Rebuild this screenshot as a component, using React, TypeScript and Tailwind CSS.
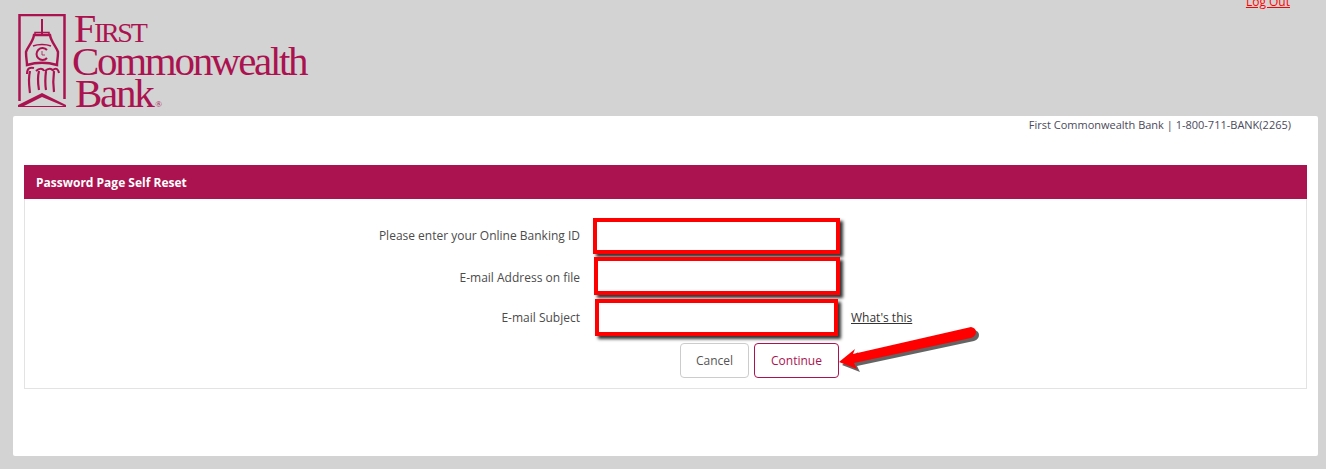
const Logo = () => {
  return (
    <div className="flex items-start pl-[18px] pt-[14px] text-[#ab1350]">
      <svg width="48" height="94" viewBox="0 0 48 94" fill="none" stroke="#ab1350" className="shrink-0">
        <path d="M46.500 85V1H1.500v86" strokeWidth="2.500" />
        <path d="M24 5v15" strokeWidth="2" />
        <path d="M17 21v-2.500h14V21" strokeWidth="1.500" />
        <path d="M16 21h16c1 7 6 11 8 17 0 6-1 9-1 13-10-3-20-3-30 0 0-4-1-7-1-13 2-6 7-10 8-17z" strokeWidth="2.400" />
        <path d="M15 32c5-2 13-2 18 0" strokeWidth="1.500" />
        <path d="M29 36a6 6 0 1 0 0 8" strokeWidth="2" />
        <path d="M24 37v4h3" strokeWidth="0.800" />
        <path d="M9 60c0-6 3-7 7-6M18 57c3-3 7-3 8 0M27 57c3-3 7-3 8 0M35 56c2-2 5-2 6 3" strokeWidth="2" />
        <path d="M12 57c-2 8-1 14 0 22M21 57c-2 8-1 13 0 19M28 57c-1 8-1 13 0 19M36 57c-1 8-1 14 0 21" strokeWidth="2.200" />
        <path fill="#ab1350" stroke="none" d="M0 93V91L24 79 48 91V93L24 83 6 92H48V93Z" />
      </svg>
      <div className="ml-[6px] flex flex-col font-['Liberation_Serif',serif] tracking-[-2.3px]">
        <div className="ml-[2px] h-[32px] text-[40px] leading-[30px]">
          F<span className="text-[28px]">IRST</span>
        </div>
        <div className="h-[32px] text-[41px] leading-[30px]">Commonwealth</div>
        <div className="ml-[3px] flex h-[29px] items-baseline text-[41px] leading-[30px]">
          Bank
          <span className="ml-[3px] text-[9px] tracking-normal">®</span>
        </div>
      </div>
    </div>
  );
};

type RowProps = {
  label: string;
  boxClass: string;
  rowClass: string;
  labelClass?: string;
  link?: string;
};

const FormRow = ({ label, boxClass, rowClass, labelClass, link }: RowProps) => {
  return (
    <div className={`flex items-center ${rowClass}`}>
      <label className={`w-[555px] shrink-0 text-right text-[12px] text-[#4b4b4b] ${labelClass ?? ""}`}>{label}</label>
      <input
        type="text"
        aria-label={label}
        className={`block border-[4px] border-[#ff0000] bg-white shadow-[3px_3px_3px_rgba(0,0,0,0.8)] ${boxClass}`}
      />
      {link && (
        <a href="#" className="ml-[13px] text-[12px] text-[#333333] underline">
          {link}
        </a>
      )}
    </div>
  );
};

export default function App() {
  return (
    <div className="h-[469px] w-[1326px] overflow-hidden bg-[#d3d3d3] font-['Open_Sans',sans-serif]">
      <header className="relative h-[116px]">
        <Logo />
        <a href="#" className="absolute right-[36px] top-[-6px] text-[12px] leading-[16px] text-[#ff0000] underline">
          Log Out
        </a>
      </header>
      <main className="ml-[13px] h-[340px] w-[1305px] rounded-[2px] bg-white px-[11px]">
        <p className="h-[49px] pr-[16px] text-right text-[11px] leading-[18px] text-[#4a4a5a]">
          First Commonwealth Bank | 1-800-711-BANK(2265)
        </p>
        <section className="h-[224px] border border-t-0 border-[#e3e3e3]">
          <h1 className="-mx-px h-[34px] bg-[#ab1350] pl-[12px] text-[12px] font-bold leading-[36px] text-white">
            Password Page Self Reset
          </h1>
          <div className="pt-[19px]">
            <FormRow label="Please enter your Online Banking ID" rowClass="" boxClass="ml-[13px] h-[36px] w-[247px]" />
            <FormRow
              label="E-mail Address on file"
              rowClass="mt-[3px]"
              labelClass="pt-[4px]"
              boxClass="ml-[14px] h-[38px] w-[246px]"
            />
            <FormRow label="E-mail Subject" rowClass="mt-[4px]" boxClass="ml-[15px] h-[37px] w-[243px]" link="What's this" />
            <div className="relative mt-[7px] flex pl-[655px]">
              <button className="h-[35px] w-[69px] rounded-[4px] border border-[#cccccc] bg-white text-[12px] text-[#555555]">
                Cancel
              </button>
              <button className="ml-[5px] h-[35px] w-[85px] rounded-[4px] border border-[#ab1350] bg-white text-[12px] text-[#ab1350]">
                Continue
              </button>
              <svg
                width="150"
                height="52"
                viewBox="0 0 150 52"
                className="absolute left-[812px] top-[-18px] overflow-visible"
              >
                <path
                  transform="translate(3 3)"
                  fill="#222222"
                  opacity="0.7"
                  d="M2 37 L18 24 L16 29 L134 2 Q139 3 139 7 Q139 11 134 13 L17 38 L20 44 Z"
                />
                <path fill="#ff0000" d="M2 37 L18 24 L16 29 L134 2 Q139 3 139 7 Q139 11 134 13 L17 38 L20 44 Z" />
              </svg>
            </div>
          </div>
        </section>
      </main>
    </div>
  );
}
